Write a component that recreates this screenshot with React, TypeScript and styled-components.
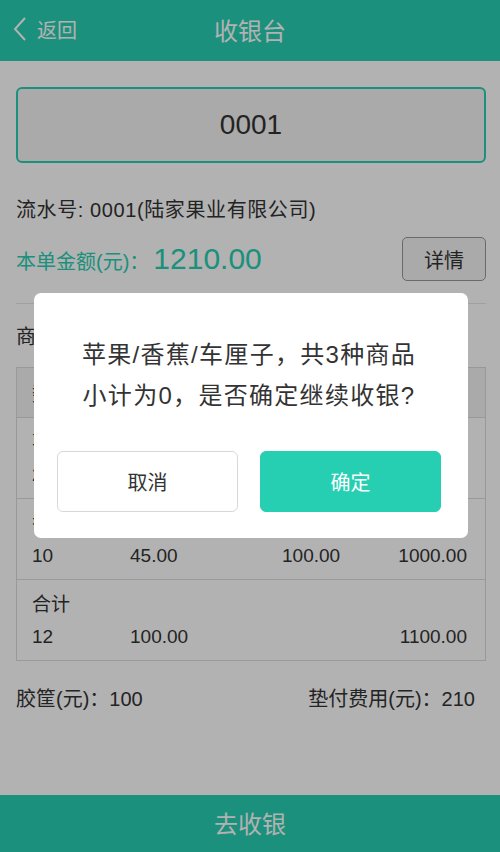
import React from "react";
import styled, { createGlobalStyle } from "styled-components";

const teal = "#27cfb2";
const font = `"Liberation Sans", "Noto Sans CJK SC", sans-serif`;

const GlobalStyle = createGlobalStyle`
  html, body {
    margin: 0;
    padding: 0;
    background: #fff;
    font-family: ${font};
    color: #333;
  }
  * { box-sizing: border-box; }
`;

const rows = [
  { name: "苹果", qty: "2", weight: "55.00", price: "50.00", sum: "100.00" },
  { name: "香蕉", qty: "10", weight: "45.00", price: "100.00", sum: "1000.00" },
];

export default function App() {
  return (
    <>
      <GlobalStyle />
      <Page>
        <Header>
          <Back>
            <svg width="14" height="26" viewBox="0 0 14 26">
              <polyline points="12,2 2,13 12,24" fill="none" stroke="#fff" strokeWidth="2" />
            </svg>
            返回
          </Back>
          <HeaderTitle>收银台</HeaderTitle>
        </Header>

        <Content>
          <CodeBox>0001</CodeBox>
          <InfoLine>流水号: 0001(陆家果业有限公司)</InfoLine>
          <AmountRow>
            <AmountLabel>
              本单金额(元)：<AmountValue>1210.00</AmountValue>
            </AmountLabel>
            <DetailButton>详情</DetailButton>
          </AmountRow>
          <Divider />
          <SectionTitle>商品明细</SectionTitle>
          <Table>
            <HeadRow>
              <Cell>数量</Cell>
              <Cell>重量</Cell>
              <Cell>单价</Cell>
              <Cell $right>小计</Cell>
            </HeadRow>
            {rows.map((r) => (
              <Row key={r.name}>
                <RowName>{r.name}</RowName>
                <Values>
                  <Cell>{r.qty}</Cell>
                  <Cell>{r.weight}</Cell>
                  <Cell>{r.price}</Cell>
                  <Cell $right>{r.sum}</Cell>
                </Values>
              </Row>
            ))}
            <Row>
              <RowName>合计</RowName>
              <Values>
                <Cell>12</Cell>
                <Cell>100.00</Cell>
                <Cell></Cell>
                <Cell $right>1100.00</Cell>
              </Values>
            </Row>
          </Table>
          <FeeRow>
            <span>胶筐(元)：100</span>
            <span>垫付费用(元)：210</span>
          </FeeRow>
        </Content>

        <BottomBar>去收银</BottomBar>

        <Overlay>
          <Dialog>
            <DialogText>
              苹果/香蕉/车厘子，共3种商品
              <br />
              小计为0，是否确定继续收银?
            </DialogText>
            <DialogActions>
              <DialogButton>取消</DialogButton>
              <DialogButton $primary>确定</DialogButton>
            </DialogActions>
          </Dialog>
        </Overlay>
      </Page>
    </>
  );
}

const Page = styled.div`
  display: flex;
  flex-direction: column;
  min-height: 100vh;
`;

const Header = styled.div`
  position: relative;
  height: 61px;
  background: ${teal};
  color: #fff;
  display: flex;
  align-items: center;
  justify-content: center;
  padding-bottom: 3px;
`;

const Back = styled.div`
  position: absolute;
  left: 13px;
  top: 0;
  bottom: 3px;
  display: flex;
  align-items: center;
  gap: 10px;
  font-size: 20px;
`;

const HeaderTitle = styled.div`
  font-size: 24px;
`;

const Content = styled.div`
  flex: 1;
  padding: 26px 14px 0 16px;
`;

const CodeBox = styled.div`
  height: 76px;
  border: 2px solid ${teal};
  border-radius: 6px;
  background: #f4f4f4;
  display: flex;
  align-items: center;
  justify-content: center;
  font-size: 28px;
  color: #333;
`;

const InfoLine = styled.div`
  margin-top: 32px;
  font-size: 20px;
  line-height: 30px;
  letter-spacing: 0.6px;
`;

const AmountRow = styled.div`
  margin-top: 12px;
  display: flex;
  align-items: center;
  justify-content: space-between;
`;

const AmountLabel = styled.div`
  color: ${teal};
  font-size: 20px;
`;

const AmountValue = styled.span`
  font-size: 30px;
  margin-left: 4px;
`;

const DetailButton = styled.div`
  width: 84px;
  height: 44px;
  border: 1px solid #999;
  border-radius: 5px;
  background: #f4f4f4;
  display: flex;
  align-items: center;
  justify-content: center;
  font-size: 20px;
`;

const Divider = styled.div`
  margin-top: 22px;
  border-top: 1px solid #e5e5e5;
`;

const SectionTitle = styled.div`
  margin-top: 18px;
  font-size: 20px;
  line-height: 30px;
`;

const Table = styled.div`
  margin-top: 15px;
  border: 1px solid #dcdcdc;
`;

const Cell = styled.div<{ $right?: boolean }>`
  text-align: ${(p) => (p.$right ? "right" : "left")};
`;

const HeadRow = styled.div`
  display: grid;
  grid-template-columns: 98px 152px 1fr 100px;
  height: 49px;
  align-items: center;
  padding: 0 18px 0 15px;
  background: #f4f4f4;
  font-size: 19px;
`;

const Row = styled.div`
  border-top: 1px solid #dcdcdc;
  padding: 9px 18px 7px 15px;
  font-size: 19px;
  line-height: 32px;
`;

const RowName = styled.div``;

const Values = styled.div`
  display: grid;
  grid-template-columns: 98px 152px 1fr 100px;
`;

const FeeRow = styled.div`
  margin-top: 23px;
  display: flex;
  justify-content: space-between;
  padding-right: 11px;
  font-size: 20px;
  line-height: 30px;
`;

const BottomBar = styled.div`
  height: 57px;
  background: ${teal};
  color: #fff;
  display: flex;
  align-items: center;
  justify-content: center;
  font-size: 24px;
  padding-bottom: 3px;
`;

const Overlay = styled.div`
  position: fixed;
  inset: 0;
  background: rgba(0, 0, 0, 0.3);
  display: flex;
  align-items: center;
  justify-content: center;
  padding-bottom: 21px;
`;

const Dialog = styled.div`
  width: 434px;
  margin-left: 2px;
  background: #fff;
  border-radius: 7px;
  padding: 41px 27px 26px 23px;
`;

const DialogText = styled.div`
  text-align: center;
  font-size: 24px;
  line-height: 41px;
  letter-spacing: 1.3px;
  color: #333;
`;

const DialogActions = styled.div`
  margin-top: 35px;
  display: flex;
  gap: 22px;
`;

const DialogButton = styled.div<{ $primary?: boolean }>`
  flex: 1;
  height: 61px;
  border-radius: 6px;
  display: flex;
  align-items: center;
  justify-content: center;
  font-size: 20px;
  background: ${(p) => (p.$primary ? teal : "#fff")};
  color: ${(p) => (p.$primary ? "#fff" : "#333")};
  border: 1px solid ${(p) => (p.$primary ? teal : "#d8d8d8")};
`;
